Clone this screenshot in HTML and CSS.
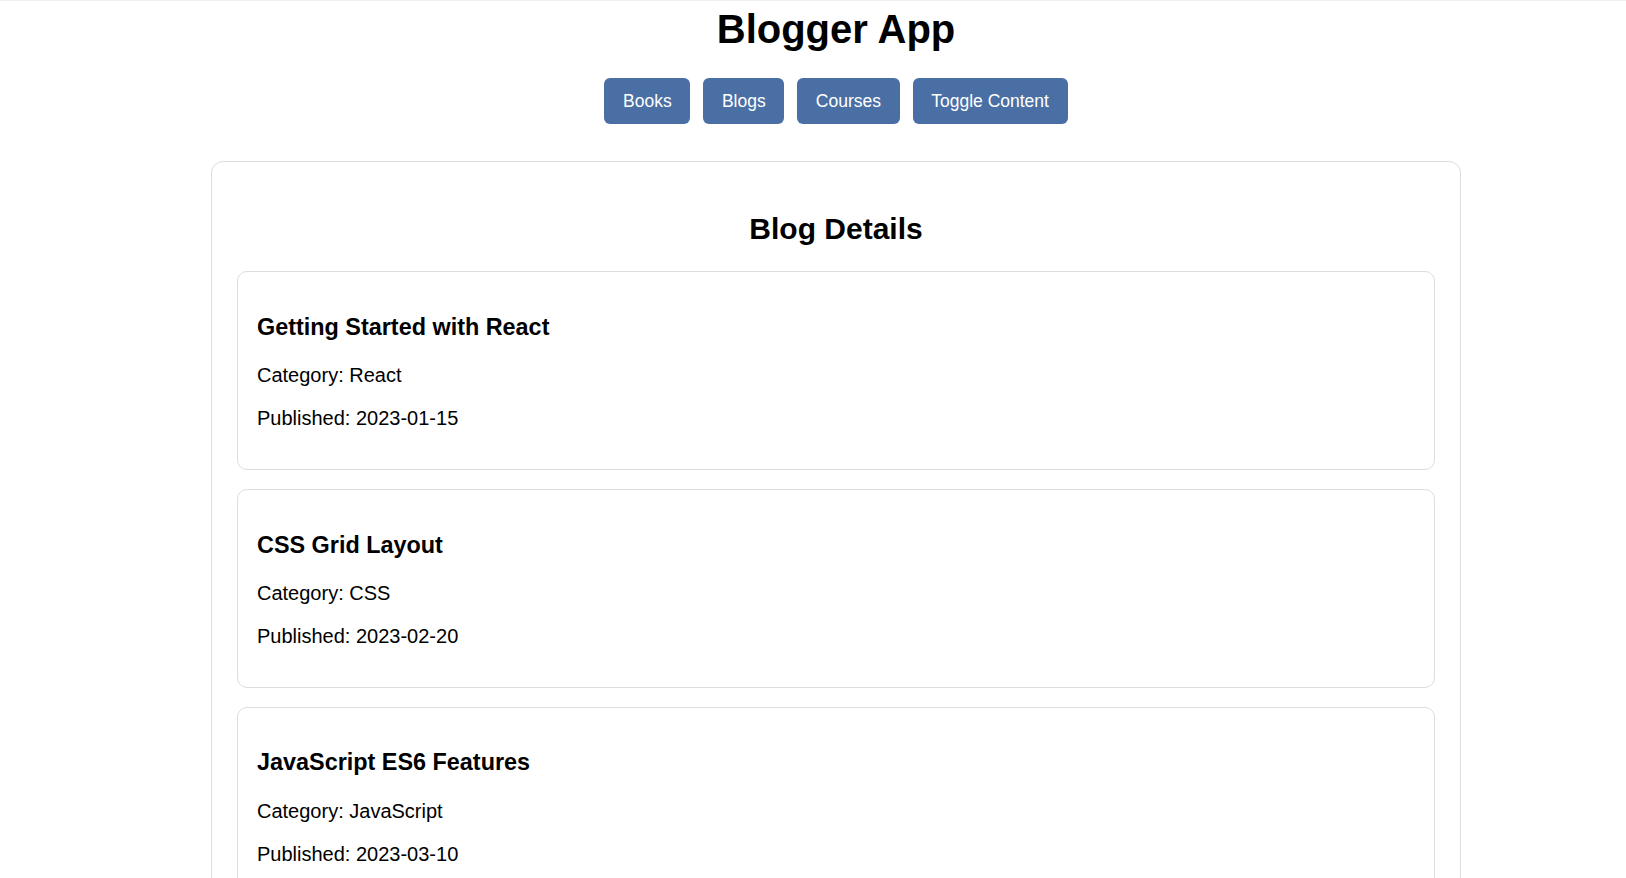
FILE: index.html
```html
<!DOCTYPE html>
<html lang="en">
<head>
<meta charset="utf-8">
<title>Blogger App</title>
<link rel="stylesheet" href="styles.css">
</head>
<body>
<div class="app">
  <h1 class="app-title">Blogger App</h1>
  <nav class="nav">
    <button class="nav-btn">Books</button>
    <button class="nav-btn">Blogs</button>
    <button class="nav-btn">Courses</button>
    <button class="nav-btn">Toggle Content</button>
  </nav>
  <section class="panel">
    <h2 class="panel-title">Blog Details</h2>
    <div class="item">
      <h3 class="item-title">Getting Started with React</h3>
      <p class="item-text">Category: React</p>
      <p class="item-text">Published: 2023-01-15</p>
    </div>
    <div class="item">
      <h3 class="item-title">CSS Grid Layout</h3>
      <p class="item-text">Category: CSS</p>
      <p class="item-text">Published: 2023-02-20</p>
    </div>
    <div class="item">
      <h3 class="item-title">JavaScript ES6 Features</h3>
      <p class="item-text">Category: JavaScript</p>
      <p class="item-text">Published: 2023-03-10</p>
    </div>
  </section>
</div>
</body>
</html>
```

FILE: styles.css
```css
html, body {
  margin: 0;
  padding: 0;
  background: #ffffff;
}
body {
  font-family: "Liberation Sans", Arial, sans-serif;
  font-size: 20px;
  color: #000;
  border-top: 1px solid #f0f0f0;
}
.app {
  padding: 0 0 0 46px;
  display: flex;
  flex-direction: column;
  align-items: center;
}
.app-title {
  font-size: 40px;
  font-weight: bold;
  margin: 5px 0 0;
  line-height: 46px;
  text-align: center;
}
.nav {
  display: flex;
  gap: 13px;
  margin-top: 26px;
}
.nav-btn {
  font-family: "Liberation Sans", Arial, sans-serif;
  font-size: 17.5px;
  color: #ffffff;
  background: #4a6fa5;
  border: none;
  border-radius: 6px;
  padding: 13px 18.6px;
  line-height: 20px;
  cursor: pointer;
}
.panel {
  box-sizing: border-box;
  width: 1250px;
  margin-top: 37px;
  border: 1px solid #dddddd;
  border-radius: 12px;
  padding: 25px;
}
.panel-title {
  font-size: 30px;
  font-weight: bold;
  text-align: center;
  margin: 25px 0;
}
.item {
  border: 1px solid #dddddd;
  border-radius: 10px;
  padding: 18.5px 19px;
  margin-bottom: 19px;
}
.item-title {
  font-size: 23.4px;
  font-weight: bold;
  margin: 23.4px 0;
}
.item-text {
  font-size: 20px;
  margin: 20px 0;
}
```
